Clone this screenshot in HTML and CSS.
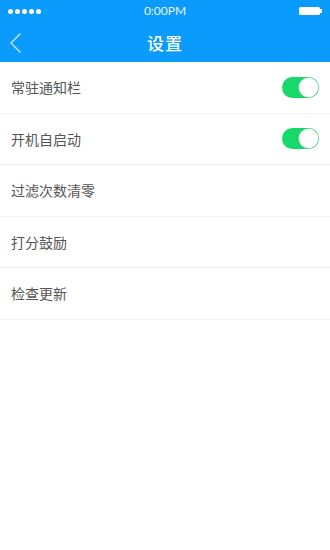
FILE: index.html
```html
<!DOCTYPE html>
<html>
<head>
<meta charset="utf-8">
<link rel="stylesheet" href="styles.css">
</head>
<body>
<div class="app">
  <header class="top">
    <div class="status">
      <div class="dots"><i></i><i></i><i></i><i></i><i></i></div>
      <div class="time">0:00PM</div>
      <div class="battery"><span class="cell"></span><span class="tip"></span></div>
    </div>
    <div class="nav">
      <svg class="back" width="14" height="22" viewBox="0 0 14 22"><path d="M11.5 1.5 L2 11 L11.5 20.5" fill="none" stroke="#cfe9ff" stroke-width="1.3"/></svg>
      <div class="title">设置</div>
    </div>
  </header>
  <ul class="list">
    <li class="row"><span class="label">常驻通知栏</span><span class="toggle"><span class="knob"></span></span></li>
    <li class="row"><span class="label">开机自启动</span><span class="toggle"><span class="knob"></span></span></li>
    <li class="row"><span class="label">过滤次数清零</span></li>
    <li class="row"><span class="label">打分鼓励</span></li>
    <li class="row"><span class="label">检查更新</span></li>
  </ul>
</div>
</body>
</html>
```
FILE: styles.css
```css
* { box-sizing: border-box; }
html, body { margin: 0; padding: 0; background: #fff; }
body { font-family: "Noto Sans CJK SC", "Noto Sans", sans-serif; }
.app { width: 330px; height: 550px; background: #fff; }
.top { background: #0a9bfc; color: #fff; }
.status { height: 22px; display: flex; align-items: center; justify-content: space-between; padding: 0 8px; position: relative; }
.dots { display: flex; gap: 2px; }
.dots i { width: 5px; height: 5px; border-radius: 50%; background: #fff; display: block; }
.time { position: absolute; left: 0; right: 0; text-align: center; font-family: "Lato", "Liberation Sans", sans-serif; font-size: 12px; line-height: 22px; color: #e8f4ff; }
.battery { display: flex; align-items: center; }
.battery .cell { width: 21px; height: 8px; background: #fff; border-radius: 1.5px; display: block; }
.battery .tip { width: 2px; height: 4px; background: #fff; display: block; }
.nav { height: 40px; display: flex; align-items: center; justify-content: center; position: relative; }
.back { position: absolute; left: 9px; top: 10px; }
.title { font-size: 17px; font-weight: 500; color: #fff; letter-spacing: 1px; }
.list { list-style: none; margin: 0; padding: 0; }
.row { height: 51.5px; border-bottom: 1px solid #f1f1f1; display: flex; align-items: center; justify-content: space-between; padding: 0 11px 0 11px; }
.label { font-size: 14px; color: #555; }
.toggle { width: 37px; height: 21px; border-radius: 11px; background: #17d86b; display: flex; align-items: center; justify-content: flex-end; padding: 1px; }
.knob { width: 19px; height: 19px; border-radius: 50%; background: #fff; box-shadow: 0 0 0 0.5px #d8d8d8; display: block; }
```
